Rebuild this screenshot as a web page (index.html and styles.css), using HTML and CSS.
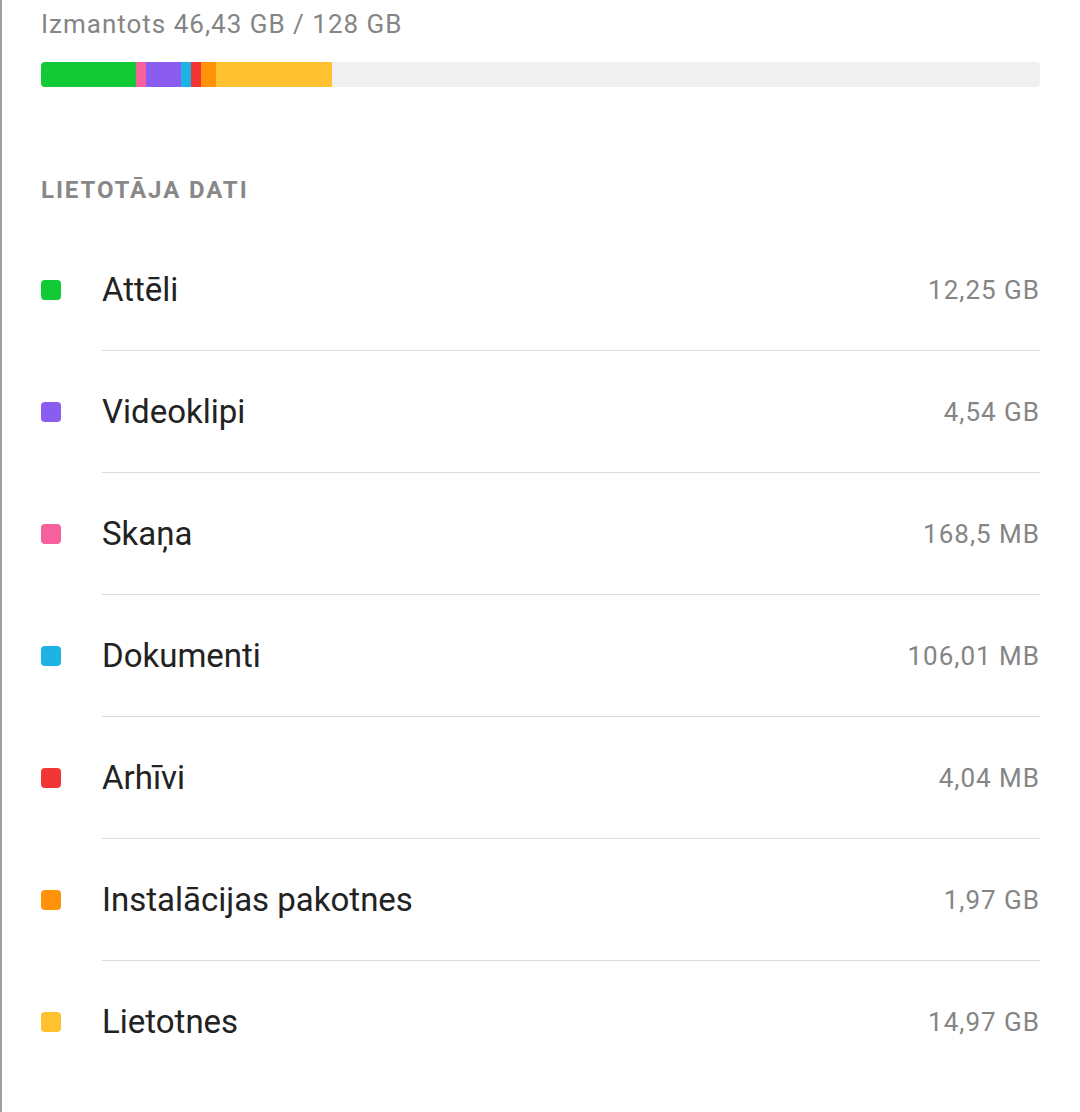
FILE: index.html
```html
<!DOCTYPE html>
<html lang="lv">
<head>
  <meta charset="UTF-8">
  <title>Krātuve</title>
  <meta name="viewport" content="width=device-width, initial-scale=1.0">
  <link rel="stylesheet" href="styles.css">
</head>
<body>
  <div class="screen">
    <div class="usage">Izmantots 46,43 GB / 128 GB</div>

    <div class="bar">
      <span class="seg green" style="width: 95px"></span>
      <span class="seg pink" style="width: 10px"></span>
      <span class="seg purple" style="width: 35px"></span>
      <span class="seg cyan" style="width: 10px"></span>
      <span class="seg red" style="width: 10px"></span>
      <span class="seg orange" style="width: 15px"></span>
      <span class="seg yellow" style="width: 116px"></span>
    </div>

    <h2 class="section-title">LIETOTĀJA DATI</h2>

    <ul class="list">
      <li class="row">
        <span class="dot green"></span>
        <div class="row-body"><span class="name">Attēli</span><span class="size">12,25 GB</span></div>
      </li>
      <li class="row">
        <span class="dot purple"></span>
        <div class="row-body"><span class="name">Videoklipi</span><span class="size">4,54 GB</span></div>
      </li>
      <li class="row">
        <span class="dot pink"></span>
        <div class="row-body"><span class="name">Skaņa</span><span class="size">168,5 MB</span></div>
      </li>
      <li class="row">
        <span class="dot cyan"></span>
        <div class="row-body"><span class="name">Dokumenti</span><span class="size">106,01 MB</span></div>
      </li>
      <li class="row">
        <span class="dot red"></span>
        <div class="row-body"><span class="name">Arhīvi</span><span class="size">4,04 MB</span></div>
      </li>
      <li class="row">
        <span class="dot orange"></span>
        <div class="row-body"><span class="name">Instalācijas pakotnes</span><span class="size">1,97 GB</span></div>
      </li>
      <li class="row">
        <span class="dot yellow"></span>
        <div class="row-body"><span class="name">Lietotnes</span><span class="size">14,97 GB</span></div>
      </li>
    </ul>
  </div>
</body>
</html>
```

FILE: styles.css
```css
body {
  margin: 0;
  background: #fff;
  font-family: Roboto, "Noto Sans", sans-serif;
  color: #222;
}

.screen {
  min-height: 1112px;
  box-sizing: border-box;
  border-left: 2px solid #a0a0a0;
  padding: 9px 40px 0 39px;
}

.usage {
  font-size: 26px;
  line-height: 30px;
  letter-spacing: 1px;
  color: #858585;
}

.bar {
  display: flex;
  height: 25px;
  margin-top: 23px;
  background: #f0f0f0;
  border-radius: 4px;
  overflow: hidden;
}

.seg {
  display: block;
  height: 100%;
}

.green  { background: #12ca35; }
.pink   { background: #f6619d; }
.purple { background: #8a5cf0; }
.cyan   { background: #1cb4e4; }
.red    { background: #f23535; }
.orange { background: #ff9208; }
.yellow { background: #ffc130; }

.section-title {
  margin: 88px 0 0;
  font-size: 24px;
  font-weight: 700;
  line-height: 30px;
  letter-spacing: 1.9px;
  color: #888;
}

.list {
  list-style: none;
  margin: 24px 0 0;
  padding: 0;
}

.row {
  display: flex;
  align-items: center;
}

.dot {
  flex: none;
  width: 20px;
  height: 20px;
  border-radius: 4px;
  margin-right: 41px;
}

.row-body {
  flex: 1;
  display: flex;
  align-items: center;
  justify-content: space-between;
  height: 121px;
  border-bottom: 1px solid #dcdcdc;
}

.row:last-child .row-body {
  border-bottom: none;
}

.name {
  font-size: 33px;
  color: #222;
}

.size {
  font-size: 26px;
  letter-spacing: 1px;
  color: #858585;
}
```
